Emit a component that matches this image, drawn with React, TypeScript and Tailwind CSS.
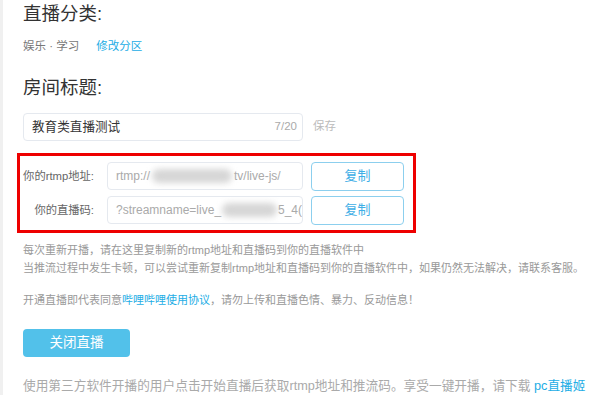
const cjk = "font-['Liberation_Sans','Noto_Sans_CJK_SC',sans-serif]"

function CopyRow({ label, children }: { label: string; children: React.ReactNode }) {
  return (
    <div className="flex items-center h-[30px]">
      <div className="w-[74px] text-right text-[11.3px] text-[#666] whitespace-nowrap">{label}</div>
      <div className="ml-[13px] w-[196px] h-[28px] border border-[#e5e9ef] rounded-[4px] flex items-center pl-[8px] overflow-hidden whitespace-nowrap text-[12px] text-[#aaa]">
        {children}
      </div>
      <button className="ml-[8px] w-[93px] h-[29px] border border-[#8ccfee] rounded-[4px] text-[13px] text-[#3eaee6] bg-white">
        复制
      </button>
    </div>
  )
}

export default function App() {
  return (
    <div className={`${cjk} w-[600px] h-[395px] overflow-hidden bg-white border-l-[3px] border-[#f0f0f0] pl-[20px]`}>
      <h2 className="mt-[2px] text-[18.5px] leading-[24px] text-[#333]">直播分类:</h2>
      <div className="mt-[12px] text-[11.5px] leading-[16px] flex">
        <span className="text-[#777]">娱乐 · 学习</span>
        <a className="ml-[17px] text-[#23ade5]">修改分区</a>
      </div>

      <h2 className="mt-[22px] text-[18.5px] leading-[24px] text-[#333]">房间标题:</h2>
      <div className="mt-[13px] flex items-center">
        <div className="w-[280px] h-[28px] border border-[#e5e9ef] rounded-[4px] flex items-center justify-between pl-[8px] pr-[5px]">
          <span className="text-[12.6px] text-[#333]">教育类直播测试</span>
          <span className="text-[11.5px] text-[#aaa]">7/20</span>
        </div>
        <span className="ml-[10px] text-[11.5px] text-[#bbb]">保存</span>
      </div>

      <div className="mt-[12px] -ml-[6px] w-[399px] border-[3px] border-[#ee0000] pt-[5px] pb-[5px] flex flex-col gap-[4px]">
        <CopyRow label="你的rtmp地址:">
          <span>rtmp://</span>
          <span className="inline-block w-[80px] h-[14px] mx-[2px] rounded-full bg-[#d6d6d6] blur-[3px]" />
          <span>tv/live-js/</span>
        </CopyRow>
        <CopyRow label="你的直播码:">
          <span>?streamname=live_</span>
          <span className="inline-block w-[58px] h-[14px] mx-[1px] rounded-full bg-[#d6d6d6] blur-[3px]" />
          <span>5_4(</span>
        </CopyRow>
      </div>

      <div className="mt-[8px] text-[11px] leading-[18px] text-[#999]">
        <p>每次重新开播，请在这里复制新的rtmp地址和直播码到你的直播软件中</p>
        <p>当推流过程中发生卡顿，可以尝试重新复制rtmp地址和直播码到你的直播软件中，如果仍然无法解决，请联系客服。</p>
        <p className="mt-[14px]">
          开通直播即代表同意<a className="text-[#23ade5]">哔哩哔哩使用协议</a>，请勿上传和直播色情、暴力、反动信息！
        </p>
      </div>

      <button className="mt-[20px] w-[107px] h-[28px] rounded-[4px] bg-[#52c1ea] text-white text-[13.5px]">
        关闭直播
      </button>

      <p className="mt-[20px] text-[12.7px] leading-[18px] text-[#aaa] whitespace-nowrap">
        使用第三方软件开播的用户点击开始直播后获取rtmp地址和推流码。享受一键开播，请下载 <a className="text-[#23ade5]">pc直播姬</a>
      </p>
    </div>
  )
}
